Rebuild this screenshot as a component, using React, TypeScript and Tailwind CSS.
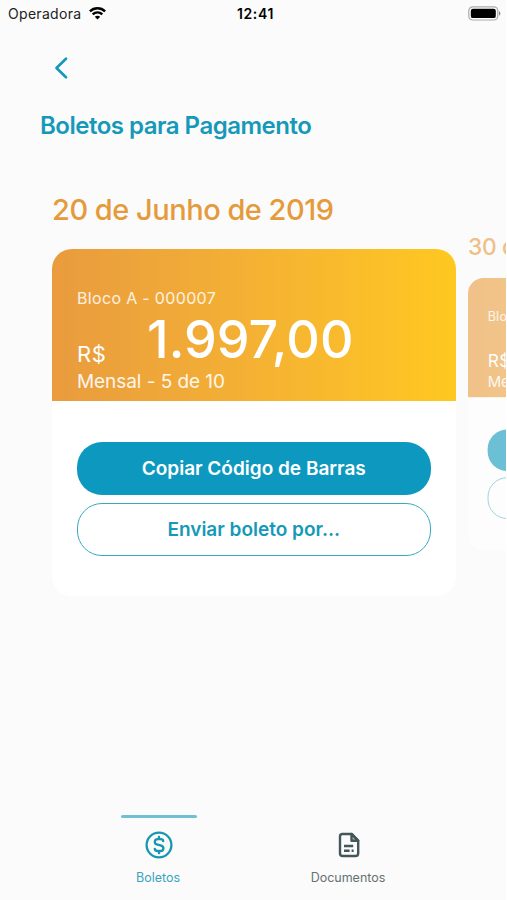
type Boleto = {
  date: string;
  unit: string;
  amount: string;
  installment: string;
};

const boletos: Boleto[] = [
  { date: "20 de Junho de 2019", unit: "Bloco A - 000007", amount: "1.997,00", installment: "Mensal - 5 de 10" },
  { date: "30 de Junho de 2019", unit: "Bloco A - 000007", amount: "1.997,00", installment: "Mensal - 6 de 10" },
];

function StatusBar() {
  return (
    <header className="grid h-7 grid-cols-3 items-center pl-2 pr-[5px] text-black">
      <div className="flex items-center gap-2">
        <span className="text-[14px] leading-7 tracking-[0.3px] text-[#222]">Operadora</span>
        <svg className="-mt-0.5" width="17" height="13" viewBox="0 0 17 13" fill="none" stroke="currentColor" strokeWidth="2.4">
          <path d="M0.9 4.4C5.2 0.2 11.8 0.2 16.1 4.4" />
          <path d="M3.7 7.3C6.4 4.7 10.6 4.7 13.3 7.3" />
          <path d="M8.5 12.6L5.8 9.8C7.3 8.4 9.7 8.4 11.2 9.8Z" fill="currentColor" stroke="none" />
        </svg>
      </div>
      <span className="pl-[2px] text-center text-[14px] font-semibold leading-7 tracking-[0.65px]">12:41</span>
      <svg className="-mt-0.5 justify-self-end" width="33" height="15" viewBox="0 0 33 15">
        <rect x="0.8" y="0.8" width="29" height="13.2" rx="4" fill="#fff" stroke="#aaa" strokeWidth="1.2" />
        <rect x="2.8" y="2.7" width="25" height="9.4" rx="2.2" />
        <path d="M31 5.2C32.8 5.8 32.8 9 31 9.6Z" fill="#888" />
      </svg>
    </header>
  );
}

function BoletoSlide({ boleto }: { boleto: Boleto }) {
  return (
    <section className="w-[404px] whitespace-nowrap">
      <h2 className="h-[61px] text-[29px] font-medium leading-[44px] tracking-[-0.49px] text-[#e59a3c]">{boleto.date}</h2>
      <div className="h-[347px] overflow-hidden rounded-[20px] bg-white">
        <div className="h-[152px] bg-linear-to-r from-[#e99b3e] to-[#ffc81f] pl-[25px] pt-10 text-white">
          <p className="text-[16px] leading-[18px] tracking-[0.33px] text-white/85">{boleto.unit}</p>
          <div className="flex h-[64px]">
            <span className="w-[70px] pt-[32px] text-[22px] leading-[30px] tracking-[0.5px]">R$</span>
            <span className="text-[52px] font-medium leading-[66px] tracking-[0.05px]">{boleto.amount}</span>
          </div>
          <p className="text-[19px] leading-[22px] tracking-[-0.06px] text-white/90">{boleto.installment}</p>
        </div>
        <div className="flex flex-col gap-[7.5px] pl-[24.5px] pt-[40.5px]">
          <button className="h-[53.5px] w-[354.5px] rounded-[25px] bg-[#0d99bf] pt-px text-[19px] font-semibold text-white">
            Copiar Código de Barras
          </button>
          <button className="h-[53.5px] w-[354.5px] rounded-[25px] border-[1.5px] border-[#38a8c2] pt-px text-[19px] font-semibold text-[#1699b9]">
            Enviar boleto por...
          </button>
        </div>
      </div>
    </section>
  );
}

function TabBar() {
  return (
    <nav className="mt-auto flex h-[85px] pl-16 text-[12.5px]">
      <button className="flex w-[190px] flex-col items-center text-[#3aa5bf]">
        <span className="h-[2.5px] w-[76px] rounded-full bg-[#6fc1d2]" />
        <svg className="mt-[13.5px]" width="28" height="28" viewBox="0 0 28 28" fill="none" stroke="#1796b4" strokeWidth="2.3" strokeLinecap="round">
          <circle cx="14" cy="14" r="12.4" />
          <path d="M14 5.8V8M14 20V22.2M18.2 10.2C18.2 8.9 17 8.1 15.5 8.1H12.7C10.9 8.1 9.8 9.2 9.8 10.8C9.8 12.4 10.8 13.4 12.4 13.7L15.5 14.3C17.3 14.7 18.4 15.6 18.4 17.2C18.4 18.9 17.3 20 15.5 20H12.6C11 20 9.8 19.2 9.8 17.8" />
        </svg>
        <span className="mt-[10px] pr-[2px] leading-[18px]">Boletos</span>
      </button>
      <button className="flex w-[190px] flex-col items-center pt-[16px] text-[#657272]">
        <svg width="28" height="28" viewBox="0 0 28 28" fill="none" stroke="#43565a" strokeWidth="2.4" strokeLinejoin="round">
          <path d="M7.5 3H17L23.2 9.5V22.3C23.2 24 22.2 25 20.5 25H7.7C6 25 5 24 5 22.3V5.5C5 3.9 5.9 3 7.5 3Z" />
          <path d="M16.5 3V9.8H23.2Z" fill="#43565a" fillOpacity="0.35" />
          <path d="M9 15H18.2M9 19.7H14.6M16.6 19.7H18.6" />
        </svg>
        <span className="mt-[10px] pr-[2px] leading-[18px]">Documentos</span>
      </button>
    </nav>
  );
}

export default function App() {
  return (
    <div className="h-[900px] w-[507px] bg-white font-['Inter',sans-serif]">
      <div className="flex h-full w-[506px] flex-col overflow-hidden bg-[#fbfbfb]">
        <StatusBar />
        <button className="ml-[54px] mt-[28px] w-4" aria-label="Voltar">
          <svg width="15" height="24" viewBox="0 0 15 24" fill="none" stroke="#1798b8" strokeWidth="2.7" strokeLinecap="round" strokeLinejoin="round">
            <path d="M12 2.8L2.5 12L12 21.3" />
          </svg>
        </button>
        <h1 className="ml-10 mt-[30px] text-[24px] font-semibold leading-8 tracking-[-0.5px] text-[#1699b9]">Boletos para Pagamento</h1>
        <main className="mt-[46px] flex h-[410px] gap-3 pl-[52px]">
          <div className="shrink-0">
            <BoletoSlide boleto={boletos[0]} />
          </div>
          <div className="mt-[42px] shrink-0 origin-top-left scale-[0.785] opacity-60">
            <BoletoSlide boleto={boletos[1]} />
          </div>
        </main>
        <TabBar />
      </div>
    </div>
  );
}
